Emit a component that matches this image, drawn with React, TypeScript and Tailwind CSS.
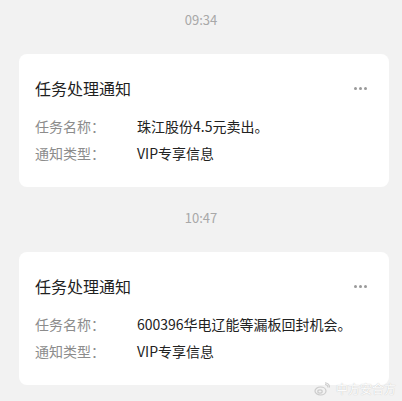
const font = { fontFamily: '"Noto Sans CJK SC", "Noto Sans", sans-serif' };

interface Notice {
  time: string;
  name: string;
  type: string;
}

const notices: Notice[] = [
  { time: '09:34', name: '珠江股份4.5元卖出。', type: 'VIP专享信息' },
  { time: '10:47', name: '600396华电辽能等漏板回封机会。', type: 'VIP专享信息' },
];

function NoticeCard({ notice }: { notice: Notice }) {
  return (
    <div>
      <div className="pt-[10px] pb-6">
        <div className="h-5 leading-5 text-center text-[13px] text-[#a8a8a8]">{notice.time}</div>
      </div>
      <div className="ml-[19px] w-[370px] bg-white rounded-lg pl-4 pr-5 pt-[22px] pb-5">
        <div className="flex items-center justify-between h-6">
          <span className="text-[16px] leading-6 text-[#1f1f1f]">任务处理通知</span>
          <span className="flex gap-[2px] mr-[2px]">
            <i className="w-[3px] h-[3px] rounded-full bg-[#9a9a9a]" />
            <i className="w-[3px] h-[3px] rounded-full bg-[#9a9a9a]" />
            <i className="w-[3px] h-[3px] rounded-full bg-[#9a9a9a]" />
          </span>
        </div>
        <div className="mt-[13px] text-[14px] leading-[27px]">
          <div className="flex">
            <span className="w-[102px] text-[#8c8c8c]">任务名称：</span>
            <span className="text-[#222]">{notice.name}</span>
          </div>
          <div className="flex">
            <span className="w-[102px] text-[#8c8c8c]">通知类型：</span>
            <span className="text-[#222]">{notice.type}</span>
          </div>
        </div>
      </div>
    </div>
  );
}

export default function App() {
  return (
    <div className="relative w-[402px] h-[401px] bg-[#f2f2f2] overflow-hidden" style={font}>
      {notices.map((n, i) => (
        <div key={i} className={i > 0 ? 'mt-[11px]' : ''}>
          <NoticeCard notice={n} />
        </div>
      ))}

      {/* watermark */}
      <div className="absolute right-[6px] bottom-[4px] flex items-center gap-[6px] opacity-90">
        <svg width="16" height="14" viewBox="0 0 16 14" fill="none" stroke="#c8c8c8" strokeWidth="1.2">
          <ellipse cx="6.5" cy="9" rx="5.5" ry="4" />
          <ellipse cx="6" cy="9.5" rx="2.2" ry="1.6" />
          <path d="M11 2.5a3 3 0 0 1 3 3" />
          <path d="M11 0.8a4.8 4.8 0 0 1 4.6 4.6" />
        </svg>
        <span className="text-[12px] leading-4 text-white [text-shadow:0_0_1px_#b0b0b0]">中方安合方</span>
      </div>
    </div>
  );
}
